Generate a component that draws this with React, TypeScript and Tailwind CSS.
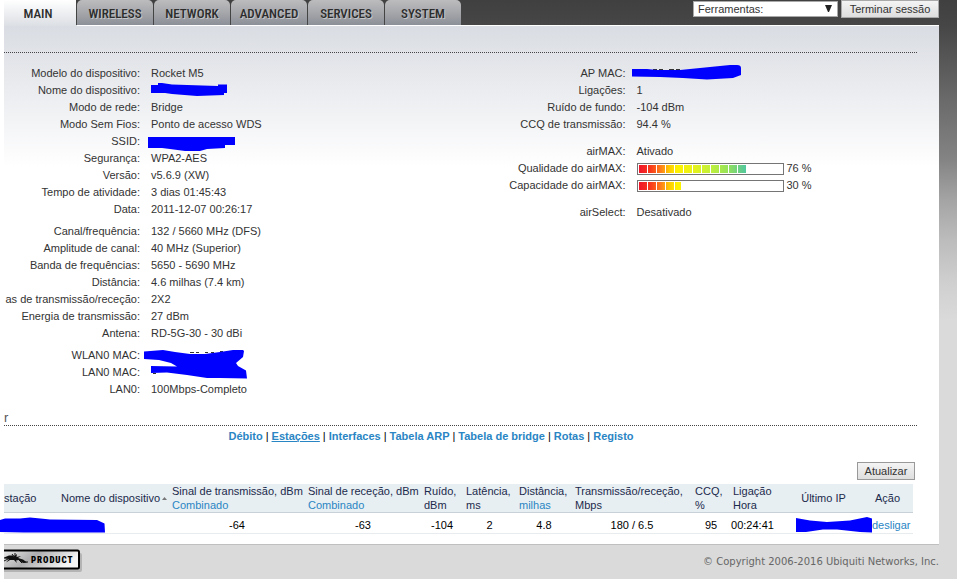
import type { ReactNode } from 'react'

const TABS = ['WIRELESS', 'NETWORK', 'ADVANCED', 'SERVICES', 'SYSTEM']

const LINKS = ['Débito', 'Estações', 'Interfaces', 'Tabela ARP', 'Tabela de bridge', 'Rotas', 'Registo']

type Row = { label: string; value: ReactNode }

const DEVICE: Row[][] = [
  [
    { label: 'Modelo do dispositivo:', value: 'Rocket M5' },
    {
      label: 'Nome do dispositivo:',
      value: (
        <Redacted
          className="top-0 left-0 h-[17px] w-20"
          box="0 0 80 17"
          d="M0 3H7V1H11L21 2.500L67 4V2.500H76V11H73V13L46 14L21 12L14 11H0Z"
        />
      ),
    },
    { label: 'Modo de rede:', value: 'Bridge' },
    { label: 'Modo Sem Fios:', value: 'Ponto de acesso WDS' },
    {
      label: 'SSID:',
      value: (
        <Redacted
          className="top-0 -left-1 h-5 w-[92px]"
          box="-4 0 92 20"
          d="M-3 4H84V12H74V15L56 16L49 18H34L19 16L11 15H-3Z"
        />
      ),
    },
    { label: 'Segurança:', value: 'WPA2-AES' },
    { label: 'Versão:', value: 'v5.6.9 (XW)' },
    { label: 'Tempo de atividade:', value: '3 dias 01:45:43' },
    { label: 'Data:', value: '2011-12-07 00:26:17' },
  ],
  [
    { label: 'Canal/frequência:', value: '132 / 5660 MHz (DFS)' },
    { label: 'Amplitude de canal:', value: '40 MHz (Superior)' },
    { label: 'Banda de frequências:', value: '5650 - 5690 MHz' },
    { label: 'Distância:', value: '4.6 milhas (7.4 km)' },
    { label: 'as de transmissão/receção:', value: '2X2' },
    { label: 'Energia de transmissão:', value: '27 dBm' },
    { label: 'Antena:', value: 'RD-5G-30 - 30 dBi' },
  ],
  [
    {
      label: 'WLAN0 MAC:',
      value: (
        <Redacted
          className="top-0 -left-2 h-[34px] w-[108px]"
          box="-8 0 108 34"
          d="M-7 4.500L12 3L24 5L39 7H54L69 5L82 3H92L93 4L92 10L85 16L87 19L95 23.500L96 31.500L69 31L56 31L36 28L16 25.500L0 26V19L26 19.500L20 16L8 13L-7 12Z"
          marks="M39 5.500H43M45 5.500H48M54 5.500H57M60 5.500H63M69 4.500H72M2 26.500H5"
        />
      ),
    },
    { label: 'LAN0 MAC:', value: '' },
    { label: 'LAN0:', value: '100Mbps-Completo' },
  ],
]

const RADIO: Row[][] = [
  [
    {
      label: 'AP MAC:',
      value: (
        <Redacted
          className="top-0 -left-2 h-[17px] w-28"
          box="-8 0 112 17"
          d="M-5 4H10L20 5H43L63 3L93 0H100Q104 0 104 3V10L96 13L70 14.500L46 13L23 12L-5 11.500Z"
          marks="M6 4.500H9M16 4.500H20M22 4.500H26M32 4.500H37M39 4.500H43"
        />
      ),
    },
    { label: 'Ligações:', value: '1' },
    { label: 'Ruído de fundo:', value: '-104 dBm' },
    { label: 'CCQ de transmissão:', value: '94.4 %' },
  ],
  [
    { label: 'airMAX:', value: 'Ativado' },
    { label: 'Qualidade do airMAX:', value: <Meter label="Qualidade do airMAX" value={76} /> },
    { label: 'Capacidade do airMAX:', value: <Meter label="Capacidade do airMAX" value={30} /> },
  ],
  [{ label: 'airSelect:', value: 'Desativado' }],
]

function Redacted({ className, box, d, marks }: { className: string; box: string; d: string; marks?: string }) {
  return (
    <svg className={`absolute ${className}`} viewBox={box} aria-hidden="true">
      {marks && <path d={marks} stroke="#333" fill="none" />}
      <path d={d} fill="#0000ff" />
    </svg>
  )
}

function Meter({ label, value }: { label: string; value: number }) {
  return (
    <span className="flex items-center gap-[3px]">
      <span
        role="meter"
        aria-label={label}
        aria-valuenow={value}
        className="block h-3 w-[147px] border border-[#757575] bg-white p-px"
      >
        <span
          className="block h-2 bg-[repeating-linear-gradient(90deg,transparent_0,transparent_8px,#fff_8px,#fff_9px),linear-gradient(90deg,#f0142a_0,#f93c1c_12px,#ff801a_22px,#ffc800_30px,#fff200_38px,#e8f218_54px,#c0f03c_72px,#98e458_88px,#64cc8c_102px,#44c8a8_110px)]"
          style={{ width: `${value}%` }}
        />
      </span>
      {value} %
    </span>
  )
}

function InfoGroups({ groups, labelWidth, gap }: { groups: Row[][]; labelWidth: string; gap: string }) {
  return (
    <div className={`flex flex-col ${gap}`}>
      {groups.map((rows, i) => (
        <dl key={i}>
          {rows.map((r) => (
            <div key={r.label} className="flex gap-[11px] leading-[17px] whitespace-nowrap">
              <dt className={`shrink-0 text-right ${labelWidth}`}>{r.label}</dt>
              <dd className="relative">{r.value}</dd>
            </div>
          ))}
        </dl>
      ))}
    </div>
  )
}

function Header() {
  return (
    <header className="flex h-[25px] items-start justify-between">
      <nav className="flex gap-px text-center font-['Roboto_Condensed','Liberation_Sans_Narrow','Liberation_Sans',sans-serif] text-[13px] leading-[27px] font-medium text-[#2c2c2c]">
        <a href="#main" className="h-[26px] w-[72px] bg-linear-to-b from-white to-[#dcdfe4] pr-1">
          MAIN
        </a>
        {TABS.map((t) => (
          <a
            key={t}
            href={`#${t.toLowerCase()}`}
            className="h-[25px] w-[76px] rounded-t-[5px] bg-linear-to-b from-[#bcbcbe] via-[#a6a7ab] to-[#8b8f97] [text-shadow:1px_1px_0_#c4c5c8]"
          >
            {t}
          </a>
        ))}
      </nav>
      <div className="flex gap-[3px]">
        <div className="relative mt-px h-4">
          <select
            aria-label="Ferramentas"
            className="h-4 w-[145px] appearance-none border border-[#a9a9a9] bg-white pl-1 text-[11px] leading-[14px] text-[#333]"
          >
            <option>Ferramentas:</option>
          </select>
          <svg className="pointer-events-none absolute top-1 right-[6px] h-[7px] w-[7px]" viewBox="0 0 7 7">
            <path d="M0 0H7L4 7H3Z" fill="#222" />
          </svg>
        </div>
        <button className="h-[18px] w-[98px] border border-[#a9a9a9] bg-linear-to-b from-[#f4f4f4] to-[#dedede] text-[11px] leading-4">
          Terminar sessão
        </button>
      </div>
    </header>
  )
}

function Stations() {
  return (
    <table className="w-full table-fixed text-left leading-[14px] whitespace-nowrap">
      <colgroup>
        <col className="w-[54px]" />
        <col className="w-[111px]" />
        <col className="w-[136px]" />
        <col className="w-[116px]" />
        <col className="w-[42px]" />
        <col className="w-[53px]" />
        <col className="w-[56px]" />
        <col className="w-[120px]" />
        <col className="w-[38px]" />
        <col className="w-[45px]" />
        <col className="w-[97px]" />
        <col className="w-[41px]" />
      </colgroup>
      <thead>
        <tr className="h-7 border-b border-[#c8d0d8] bg-[#e7eff2] text-[#1c2a4c] [&>th]:p-0 [&>th]:pl-[3px] [&>th]:font-normal">
          <th className="!pl-0">stação</th>
          <th>
            <span className="flex items-center gap-[2px]">
              Nome do dispositivo
              <svg className="h-[3px] w-[5px]" viewBox="0 0 5 3">
                <path d="M2.500 0L5 3H0Z" fill="#777" />
              </svg>
            </span>
          </th>
          <th>
            Sinal de transmissão, dBm
            <br />
            <a href="#tx" className="text-[#2a85c4]">Combinado</a>
          </th>
          <th>
            Sinal de receção, dBm
            <br />
            <a href="#rx" className="text-[#2a85c4]">Combinado</a>
          </th>
          <th>
            Ruído,
            <br />
            dBm
          </th>
          <th>
            Latência,
            <br />
            ms
          </th>
          <th>
            Distância,
            <br />
            <a href="#dist" className="text-[#2a85c4]">milhas</a>
          </th>
          <th>
            Transmissão/receção,
            <br />
            Mbps
          </th>
          <th>
            CCQ,
            <br />%
          </th>
          <th>
            Ligação
            <br />
            Hora
          </th>
          <th className="!pl-0 text-center">Último IP</th>
          <th>Ação</th>
        </tr>
      </thead>
      <tbody>
        <tr className="h-[21px] border-b border-[#e8ecee] text-center text-black [&>td]:p-0 [&>td]:pt-[3px]">
          <td className="relative">
            <Redacted
              className="top-1 -left-1 h-4 w-[106px]"
              box="0 0 106 16"
              d="M0 3L5 1.500L20 1.500L30 0.500L43 1.700L50 2.500L97 3L104.500 6.500L105 15.500H24L0 15Z"
            />
          </td>
          <td />
          <td>-64</td>
          <td>-63</td>
          <td>-104</td>
          <td>2</td>
          <td>4.8</td>
          <td>180 / 6.5</td>
          <td>95</td>
          <td>00:24:41</td>
          <td className="relative">
            <Redacted
              className="top-1 right-0 h-4 w-[76px]"
              box="0 0 76 16"
              d="M0 1L14 3.500L31 5L54 3.500L71 0L76 1.500V15.500L64 15L41 12.500H27L10 15H0Z"
            />
          </td>
          <td className="text-left">
            <a href="#kick" className="text-[#2a85c4]">desligar</a>
          </td>
        </tr>
      </tbody>
    </table>
  )
}

function Footer() {
  return (
    <footer className="flex items-start justify-between pt-[3px]">
      <svg className="h-7 w-20" viewBox="0 0 80 28" role="img" aria-label="Product">
        <defs>
          <linearGradient id="plate" x1="0" y1="0" x2="1" y2="0.3">
            <stop offset="0" stopColor="#f4f4f4" />
            <stop offset="0.5" stopColor="#aeaeb0" />
            <stop offset="1" stopColor="#f6f6f6" />
          </linearGradient>
        </defs>
        <rect x="-6" y="5" width="84" height="19" rx="2" fill="#b4b4b4" />
        <rect x="-8" y="2.500" width="83" height="18" rx="1.500" fill="url(#plate)" stroke="#000" strokeWidth="2" />
        <path
          d="M0 9.500L5 7.500H10L9 9L13 6L12.500 9L17 8L14 10L19 11.500L23 14.500L19 15L15 12L12 12.500L13 15L10 12L6 12L2 14.500L5 11L0 10.500Z"
          fill="#111"
        />
        <path d="M11 5V9M8 6L11 10M0 13L6 10M15 12L18 15M20 14H24" stroke="#111" strokeWidth="1" fill="none" />
        <text
          x="27"
          y="15"
          fill="#000"
          className="font-['Roboto_Condensed','Liberation_Sans_Narrow','Liberation_Sans',sans-serif] text-[9px] font-black tracking-widest"
        >
          PRODUCT
        </text>
      </svg>
      <p className="pt-[6px] font-['DejaVu_Sans',sans-serif] text-[10px] leading-4 text-[#666]">
        © Copyright 2006-2016 Ubiquiti Networks, Inc.
      </p>
    </footer>
  )
}

export default function App() {
  return (
    <div className="min-h-screen bg-white pl-1 font-['Liberation_Sans',Arial,sans-serif] text-[11px] text-[#333]">
      <div className="min-h-screen bg-[#dadada] bg-[linear-gradient(180deg,#404040_0,#464646_25px,#6a6a6a_100px,#848484_160px,#a4a4a4_200px,#bcbcbc_240px,#d0d0d0_285px,#dadada_320px)] pr-[18px]">
        <Header />
        <main className="border-b border-[#bfbfbf] bg-white bg-[linear-gradient(180deg,#d9dce2_0,#fff_142px)] pb-[10px]">
          <div className="ml-[73px] h-px bg-white" />
          <section className="mt-[26px] mr-[22px] grid grid-cols-2 border-t border-dotted border-[#444] pt-3">
            <InfoGroups groups={DEVICE} labelWidth="w-[136px]" gap="gap-[5px]" />
            <InfoGroups groups={RADIO} labelWidth="w-[165px]" gap="gap-[10px]" />
          </section>
          <h2 className="mt-3 mr-[22px] border-b border-dotted border-[#444] text-[13px] leading-[15px] text-[#555]">
            r
          </h2>
          <nav className="mr-[22px] flex justify-center gap-[3px] pr-[59px] pt-[2px] leading-4 font-bold text-black">
            {LINKS.map((l, i) => (
              <span key={l} className="flex gap-[3px]">
                {i > 0 && <span className="font-normal">|</span>}
                <a href={`#${i}`} className={l === 'Estações' ? 'text-[#2a85c4] underline' : 'text-[#2a85c4]'}>
                  {l}
                </a>
              </span>
            ))}
          </nav>
          <div className="mt-[18px] mr-6 flex justify-end">
            <button className="h-[18px] w-[58px] border border-[#999] bg-linear-to-b from-[#f4f4f4] to-[#dedede] leading-4">
              Atualizar
            </button>
          </div>
          <div className="mt-1 mr-[26px]">
            <Stations />
          </div>
        </main>
        <Footer />
      </div>
    </div>
  )
}
